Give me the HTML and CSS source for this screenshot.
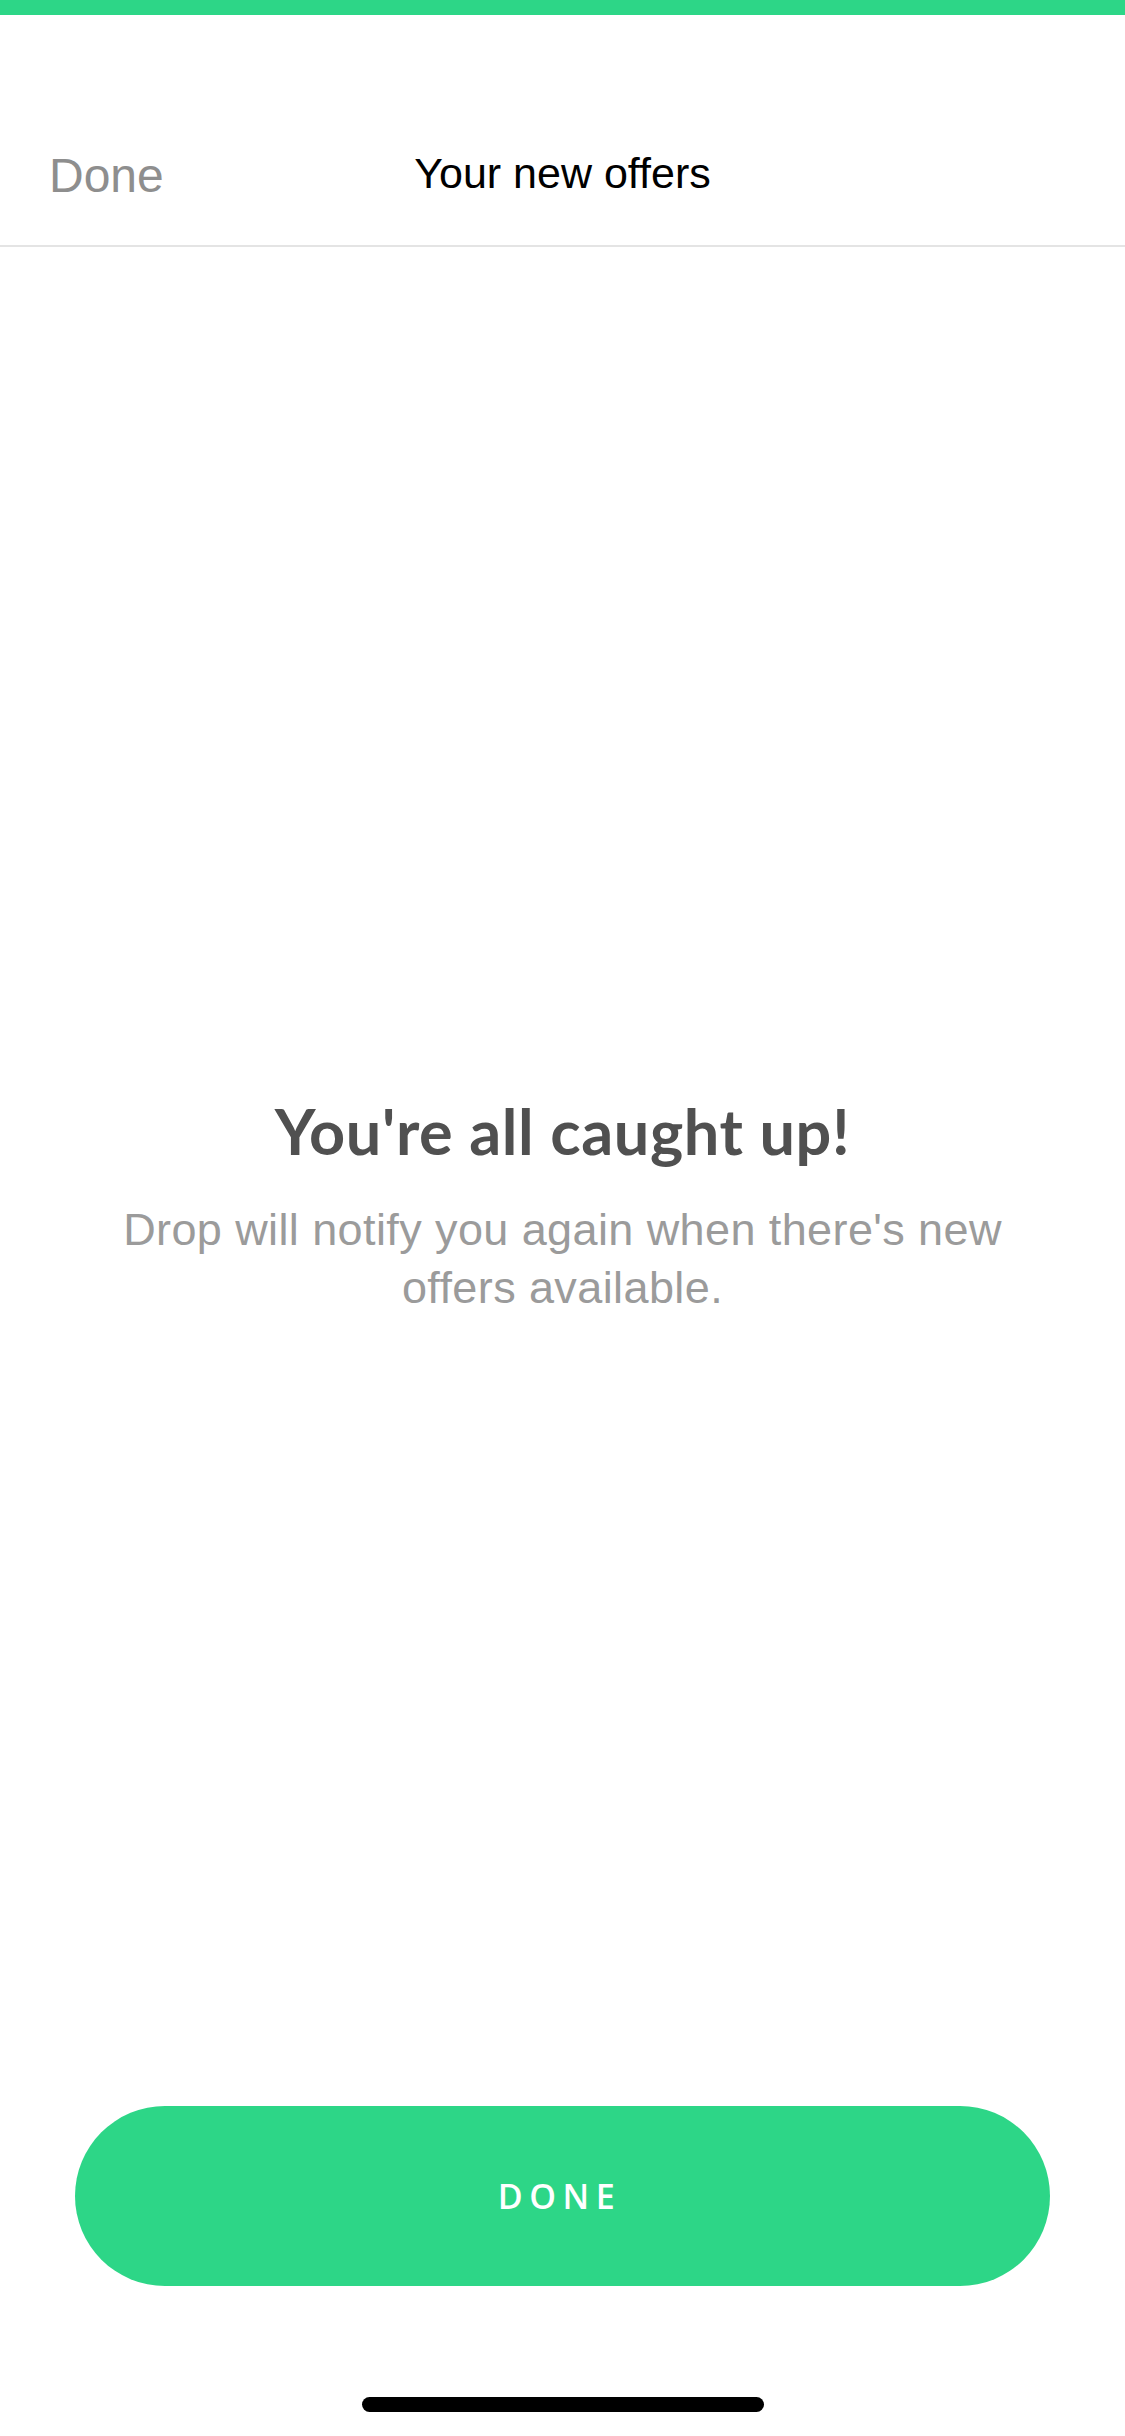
FILE: index.html
```html
<!DOCTYPE html>
<html lang="en">
<head>
<meta charset="utf-8">
<title>Your new offers</title>
<link rel="stylesheet" href="styles.css">
</head>
<body>
<div class="topbar"></div>
<header class="header">
  <div class="header-left">Done</div>
  <div class="header-title">Your new offers</div>
  <div class="header-right"></div>
</header>
<main class="main">
  <h1 class="title">You're all caught up!</h1>
  <p class="subtitle">Drop will notify you again when there's new offers available.</p>
</main>
<footer class="footer">
  <button class="done-btn">DONE</button>
  <div class="home-indicator"></div>
</footer>
</body>
</html>
```
FILE: styles.css
```css
* { box-sizing: border-box; }
html, body {
  margin: 0;
  padding: 0;
}
body {
  width: 1125px;
  height: 2436px;
  background: #ffffff;
  display: flex;
  flex-direction: column;
  font-family: "Liberation Sans", Arial, sans-serif;
  overflow: hidden;
}
.topbar {
  height: 15px;
  background: #2dd687;
  flex: none;
}
.header {
  flex: none;
  height: 232px;
  border-bottom: 2px solid #e4e4e4;
  display: grid;
  grid-template-columns: 1fr auto 1fr;
  align-items: start;
  padding: 137px 49px 0;
}
.header-left {
  font-size: 48px;
  line-height: 1;
  color: #8e8e8e;
}
.header-title {
  font-size: 43px;
  line-height: 1;
  color: #000000;
}
.main {
  flex: 1;
  padding-top: 846px;
  text-align: center;
}
.title {
  margin: 0;
  font-family: "Lato", "Liberation Sans", sans-serif;
  font-weight: 700;
  font-size: 63px;
  line-height: 1.2;
  letter-spacing: 0.6px;
  color: #505050;
}
.subtitle {
  margin: 32px auto 0;
  max-width: 920px;
  font-size: 45px;
  line-height: 58px;
  letter-spacing: 0.4px;
  color: #9b9b9b;
}
.footer {
  flex: none;
  padding: 0 75px 24px;
  display: flex;
  flex-direction: column;
  align-items: center;
}
.done-btn {
  width: 100%;
  height: 180px;
  border: none;
  border-radius: 90px;
  background: #2dd687;
  color: #ffffff;
  font-family: "Open Sans", "DejaVu Sans", sans-serif;
  font-weight: 600;
  font-size: 34px;
  letter-spacing: 6.5px;
  padding: 0 6px 0 0;
  margin-bottom: 111px;
}
.home-indicator {
  width: 402px;
  height: 15px;
  border-radius: 8px;
  background: #000000;
}
```
